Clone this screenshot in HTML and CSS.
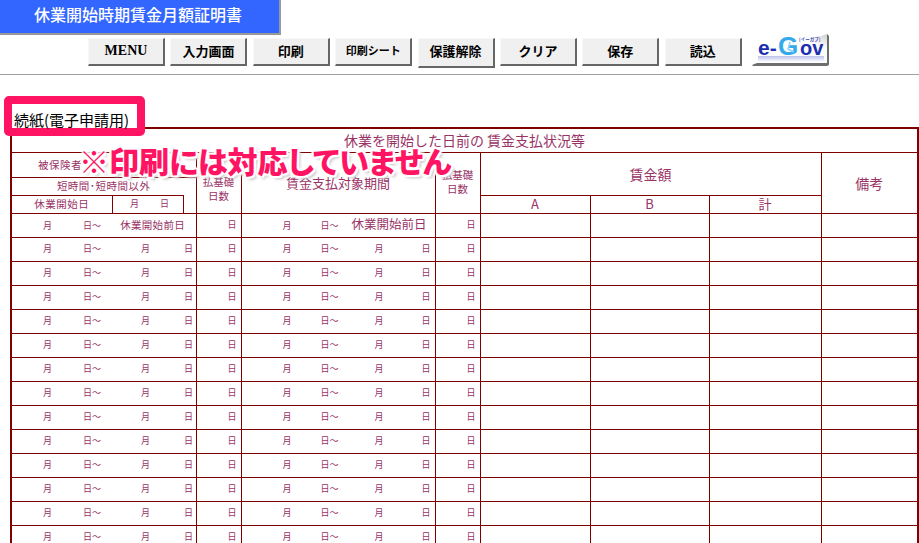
FILE: index.html
```html
<!DOCTYPE html>
<html lang="ja">
<head>
<meta charset="utf-8">
<title>休業開始時期賃金月額証明書</title>
<link rel="stylesheet" href="styles.css">
</head>
<body>
<h1 class="title">休業開始時期賃金月額証明書</h1>
<nav class="toolbar">
  <button class="btn btn-latin">MENU</button>
  <button class="btn">入力画面</button>
  <button class="btn">印刷</button>
  <button class="btn btn-narrow">印刷シート</button>
  <button class="btn btn-tall">保護解除</button>
  <button class="btn">クリア</button>
  <button class="btn">保存</button>
  <button class="btn">読込</button>
  <svg class="egov" width="77" height="32" viewBox="0 0 77 32" aria-label="e-Gov">
    <defs>
      <linearGradient id="fade" x1="0" y1="1" x2="1" y2="0">
        <stop offset="0" stop-color="#ffffff"/>
        <stop offset="0.75" stop-color="#fbfbfb"/>
        <stop offset="1" stop-color="#cfcfcf"/>
      </linearGradient>
      <linearGradient id="reflect" x1="0" y1="0" x2="0" y2="1">
        <stop offset="0" stop-color="#8f9be0"/>
        <stop offset="1" stop-color="#ffffff"/>
      </linearGradient>
    </defs>
    <path d="M0 31 L5 29 L75 29 L75 0 L77 2 L77 31 L75 32 L1 32 Z" fill="#6e6e6e"/>
    <path d="M3 29 L5 22 L66 3 L75 0 L75 29 Z" fill="url(#fade)"/>
    <rect x="6" y="22" width="66" height="6" fill="url(#reflect)" opacity="0.6"/>
    <text class="egov-e" x="6" y="21">e-</text>
    <text class="egov-g" x="26" y="21">G</text>
    <path d="M38 8 L36 15 L42 18" fill="none" stroke="#8ad6f7" stroke-width="1.5"/>
    <text class="egov-o" x="48" y="21">ov</text>
    <text class="egov-kana" x="47" y="7">[イーガブ]</text>
  </svg>
</nav>
<hr class="rule">
<div class="sheet-label">続紙(電子申請用)</div>
<main class="sheet">
  <table class="wages">
    <colgroup>
      <col class="c1"><col class="c2"><col class="c3"><col class="c4"><col class="c5">
      <col class="c6"><col class="c7"><col class="c8"><col class="c9"><col class="c10">
    </colgroup>
    <thead>
      <tr class="h-title"><th colspan="10" class="big">休業を開始した日前の 賃金支払状況等</th></tr>
      <tr class="h-a">
        <th colspan="3" class="small spaced flush">被保険者</th>
        <th rowspan="3" class="small stack-low">払基礎<br>日数</th>
        <th rowspan="3" class="mid">賃金支払対象期間</th>
        <th rowspan="3" class="small stack-high">払基礎<br>日数</th>
        <th colspan="3" rowspan="2" class="big">賃金額</th>
        <th rowspan="3" class="big">備考</th>
      </tr>
      <tr class="h-b"><th colspan="3" class="small spaced open-bottom">短時間･短時間以外</th></tr>
      <tr class="h-c">
        <th class="small spaced">休業開始日</th>
        <th class="date"><span class="m">月</span><span class="d">日</span></th>
        <th class="blank"></th>
        <th class="mid">A</th><th class="mid">B</th><th class="mid">計</th>
      </tr>
    </thead>
    <tbody>
      <tr>
        <td colspan="3" class="range left"><span>月</span><span>日～</span><span class="note">休業開始前日</span></td>
        <td class="days">日</td>
        <td class="range right"><span>月</span><span>日～</span><span class="note note-l">休業開始前日</span></td>
        <td class="days">日</td><td></td><td></td><td></td><td></td>
      </tr>
      <tr><td colspan="3" class="range left"><span>月</span><span>日～</span><span>月</span><span>日</span></td><td class="days">日</td><td class="range right"><span>月</span><span>日～</span><span>月</span><span>日</span></td><td class="days">日</td><td></td><td></td><td></td><td></td></tr>
      <tr><td colspan="3" class="range left"><span>月</span><span>日～</span><span>月</span><span>日</span></td><td class="days">日</td><td class="range right"><span>月</span><span>日～</span><span>月</span><span>日</span></td><td class="days">日</td><td></td><td></td><td></td><td></td></tr>
      <tr><td colspan="3" class="range left"><span>月</span><span>日～</span><span>月</span><span>日</span></td><td class="days">日</td><td class="range right"><span>月</span><span>日～</span><span>月</span><span>日</span></td><td class="days">日</td><td></td><td></td><td></td><td></td></tr>
      <tr><td colspan="3" class="range left"><span>月</span><span>日～</span><span>月</span><span>日</span></td><td class="days">日</td><td class="range right"><span>月</span><span>日～</span><span>月</span><span>日</span></td><td class="days">日</td><td></td><td></td><td></td><td></td></tr>
      <tr><td colspan="3" class="range left"><span>月</span><span>日～</span><span>月</span><span>日</span></td><td class="days">日</td><td class="range right"><span>月</span><span>日～</span><span>月</span><span>日</span></td><td class="days">日</td><td></td><td></td><td></td><td></td></tr>
      <tr><td colspan="3" class="range left"><span>月</span><span>日～</span><span>月</span><span>日</span></td><td class="days">日</td><td class="range right"><span>月</span><span>日～</span><span>月</span><span>日</span></td><td class="days">日</td><td></td><td></td><td></td><td></td></tr>
      <tr><td colspan="3" class="range left"><span>月</span><span>日～</span><span>月</span><span>日</span></td><td class="days">日</td><td class="range right"><span>月</span><span>日～</span><span>月</span><span>日</span></td><td class="days">日</td><td></td><td></td><td></td><td></td></tr>
      <tr><td colspan="3" class="range left"><span>月</span><span>日～</span><span>月</span><span>日</span></td><td class="days">日</td><td class="range right"><span>月</span><span>日～</span><span>月</span><span>日</span></td><td class="days">日</td><td></td><td></td><td></td><td></td></tr>
      <tr><td colspan="3" class="range left"><span>月</span><span>日～</span><span>月</span><span>日</span></td><td class="days">日</td><td class="range right"><span>月</span><span>日～</span><span>月</span><span>日</span></td><td class="days">日</td><td></td><td></td><td></td><td></td></tr>
      <tr><td colspan="3" class="range left"><span>月</span><span>日～</span><span>月</span><span>日</span></td><td class="days">日</td><td class="range right"><span>月</span><span>日～</span><span>月</span><span>日</span></td><td class="days">日</td><td></td><td></td><td></td><td></td></tr>
      <tr><td colspan="3" class="range left"><span>月</span><span>日～</span><span>月</span><span>日</span></td><td class="days">日</td><td class="range right"><span>月</span><span>日～</span><span>月</span><span>日</span></td><td class="days">日</td><td></td><td></td><td></td><td></td></tr>
      <tr><td colspan="3" class="range left"><span>月</span><span>日～</span><span>月</span><span>日</span></td><td class="days">日</td><td class="range right"><span>月</span><span>日～</span><span>月</span><span>日</span></td><td class="days">日</td><td></td><td></td><td></td><td></td></tr>
      <tr><td colspan="3" class="range left"><span>月</span><span>日～</span><span>月</span><span>日</span></td><td class="days">日</td><td class="range right"><span>月</span><span>日～</span><span>月</span><span>日</span></td><td class="days">日</td><td></td><td></td><td></td><td></td></tr>
    </tbody>
  </table>
  <p class="notice">※印刷には対応していません</p>
</main>
</body>
</html>
```

FILE: styles.css
```css
html, body {
  margin: 0;
  padding: 0;
  height: 543px;
  overflow: hidden;
  background: #fff;
  font-family: "Noto Sans CJK JP", "Liberation Sans", sans-serif;
}

.title {
  box-sizing: border-box;
  width: 281px;
  height: 35px;
  margin: 0;
  padding: 2px 0 0 34px;
  background: #3366ff;
  border-right: 2px solid #999;
  border-bottom: 2px solid #999;
  color: #fff;
  font-size: 16px;
  font-weight: 500;
  line-height: 24px;
  white-space: nowrap;
}

.toolbar {
  display: flex;
  align-items: flex-start;
  gap: 5.4px;
  height: 39px;
  padding-left: 88px;
}

.btn {
  box-sizing: border-box;
  flex: none;
  width: 77px;
  height: 28px;
  margin: 3px 0 0;
  padding: 0 0 2px;
  background: #f0f0f0;
  border: 1px solid #f8f8f8;
  border-right: 2px solid #666;
  border-bottom: 2px solid #666;
  color: #000;
  font-family: "Noto Sans CJK JP", sans-serif;
  font-size: 13px;
  font-weight: 700;
  line-height: 1;
}

.btn-latin {
  font-family: "Liberation Serif", serif;
  font-size: 14px;
}
.btn-narrow { font-size: 11px; }
.btn-tall { height: 30px; padding-bottom: 5px; }

.egov {
  flex: none;
  margin: -1px 0 0 5px;
  overflow: visible;
}
.egov-e,
.egov-o {
  font-family: "Liberation Sans", sans-serif;
  font-weight: 700;
  fill: #1c2fb0;
}
.egov-e { font-size: 21px; }
.egov-o { font-size: 20px; }
.egov-g {
  font-family: "Liberation Sans", sans-serif;
  font-size: 26px;
  font-weight: 700;
  fill: #35a9ea;
}
.egov-kana {
  font-family: "Noto Sans CJK JP", sans-serif;
  font-size: 4.5px;
  font-weight: 700;
  fill: #3a46b8;
}

.rule {
  height: 1px;
  margin: 0;
  border: 0;
  background: #a0a0a0;
}

.sheet-label {
  position: relative;
  z-index: 2;
  box-sizing: border-box;
  width: 141px;
  height: 40px;
  margin: 21px 0 -9px 4px;
  padding: 6px 0 0 2px;
  background: #fff;
  border: 8px solid #ff1464;
  border-radius: 5px;
  color: #000;
  font-size: 15px;
  line-height: 20px;
  white-space: nowrap;
}

.sheet {
  position: relative;
  padding-left: 10px;
}

.wages {
  table-layout: fixed;
  width: 909px;
  border-collapse: collapse;
  border: 2px solid #800000;
  color: #993366;
}
.wages th,
.wages td {
  padding: 0;
  border: 1px solid #800000;
  font-weight: 400;
  text-align: center;
  vertical-align: middle;
}

.c1 { width: 101px; }
.c2 { width: 71px; }
.c3 { width: 13px; }
.c4 { width: 45px; }
.c5 { width: 194px; }
.c6 { width: 45px; }
.c7 { width: 110px; }
.c8 { width: 119px; }
.c9 { width: 112px; }
.c10 { width: 97px; }

.h-title { height: 24px; }
.h-a { height: 25px; }
.h-b { height: 18px; }
.h-c { height: 18px; }
.wages tbody tr { height: 24px; }

.big { font-size: 14px; line-height: 16px; }
.mid { font-size: 13px; line-height: 16px; }
.small { font-size: 10.5px; line-height: 14px; }
.spaced { letter-spacing: 0.5px; white-space: nowrap; }

.wages .flush { padding-left: 26px; text-align: left; }
.wages .stack-low { padding-top: 12px; }
.wages .stack-high { padding-top: 15px; vertical-align: top; }

.wages .open-bottom { border-bottom: none; }
.wages .blank { border-top: none; }

.date {
  font-size: 9px;
  line-height: 14px;
}
.date .m { margin-left: 4px; }
.date .d { margin-left: 21px; }

.range {
  font-size: 9px;
  line-height: 14px;
}
.range span {
  display: inline-block;
  text-align: right;
}
.left span:nth-child(1) { width: 40px; }
.left span:nth-child(2) { width: 49px; }
.left span:nth-child(3) { width: 49px; }
.left span:nth-child(4) { width: 43px; }
.right span:nth-child(1) { width: 50px; }
.right span:nth-child(2) { width: 47px; }
.right span:nth-child(3) { width: 45px; }
.right span:nth-child(4) { width: 47px; }
.wages .range { text-align: left; }

.left span.note {
  width: 84px;
  font-size: 10.5px;
  letter-spacing: 0.3px;
}
.right span.note-l {
  width: 88px;
  font-size: 12.5px;
}

.wages .days {
  padding-right: 4px;
  font-size: 9px;
  line-height: 14px;
  text-align: right;
}

.notice {
  position: absolute;
  top: 14px;
  left: 79px;
  z-index: 1;
  margin: 0;
  color: #ff1464;
  font-size: 30px;
  font-weight: 900;
  font-feature-settings: "palt";
  line-height: 38px;
  white-space: nowrap;
  text-shadow: -2px 0 1px #fff, 2px 0 1px #fff, 0 2px 1px #fff, 0 -2px 1px #fff, -2px -2px 1px #fff, 2px -2px 1px #fff, -2px 2px 1px #fff, 2px 2px 1px #fff, 3px 3px 3px #bbb;
}
```
